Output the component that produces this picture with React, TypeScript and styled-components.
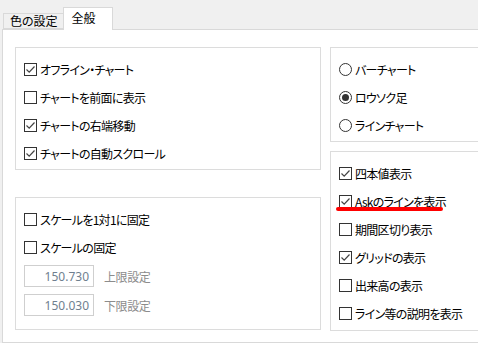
import styled, { createGlobalStyle } from "styled-components";

const GlobalStyle = createGlobalStyle`
  html, body {
    margin: 0;
    padding: 0;
    background: #f0f0f0;
    overflow: hidden;
  }
  body {
    font-family: "Noto Sans CJK JP", "Noto Sans", sans-serif;
    font-size: 12px;
    color: #000;
    font-feature-settings: "palt";
  }
`;

const Window = styled.div`
  width: 478px;
  height: 343px;
  overflow: hidden;
`;

const TabStrip = styled.div`
  display: flex;
  align-items: flex-end;
  height: 29px;
  padding-left: 3px;
`;

const Tab = styled.div<{ $active?: boolean }>`
  position: relative;
  z-index: 1;
  box-sizing: border-box;
  height: ${(p) => (p.$active ? "23px" : "16px")};
  padding: ${(p) => (p.$active ? "3px 16px 0 8px" : "0 5px 0 6px")};
  margin-bottom: ${(p) => (p.$active ? "-1px" : "0")};
  background: ${(p) => (p.$active ? "#fff" : "#f0f0f0")};
  border: 1px solid #d9d9d9;
  border-bottom: ${(p) => (p.$active ? "none" : "1px solid #d9d9d9")};
  border-right: ${(p) => (p.$active ? "1px solid #d9d9d9" : "none")};
  display: flex;
  align-items: ${(p) => (p.$active ? "flex-start" : "center")};
  font-size: 12px;
  line-height: 14px;
`;

const Panel = styled.div`
  box-sizing: border-box;
  width: 520px;
  height: 314px;
  margin-left: 2px;
  background: #fff;
  border: 1px solid #d9d9d9;
  padding: 17px 0 0 12px;
  display: flex;
  gap: 9px;
`;

const Column = styled.div<{ $gap: number; $width: number }>`
  display: flex;
  flex-direction: column;
  gap: ${(p) => p.$gap}px;
  width: ${(p) => p.$width}px;
`;

const Group = styled.div<{ $height: number }>`
  box-sizing: border-box;
  height: ${(p) => p.$height}px;
  border: 1px solid #dcdcdc;
  padding: 7px 0 0 8px;
  display: flex;
  flex-direction: column;
`;

const Row = styled.label`
  position: relative;
  display: flex;
  align-items: center;
  gap: 3px;
  height: 28px;
  white-space: nowrap;
  letter-spacing: -0.7px;
`;

const Box = styled.span`
  box-sizing: border-box;
  width: 13px;
  height: 13px;
  border: 1px solid #333;
  background: #fff;
  display: flex;
  align-items: center;
  justify-content: center;
  flex-shrink: 0;
`;

const Radio = styled.span`
  box-sizing: border-box;
  width: 13px;
  height: 13px;
  border: 1px solid #333;
  border-radius: 50%;
  background: #fff;
  display: flex;
  align-items: center;
  justify-content: center;
  flex-shrink: 0;
`;

const Dot = styled.span`
  width: 7px;
  height: 7px;
  border-radius: 50%;
  background: #333;
`;

const InputRow = styled.div`
  display: flex;
  align-items: center;
  gap: 10px;
  height: 22px;
  margin-top: 4px;
  letter-spacing: -0.4px;
  & + & {
    margin-top: 7px;
  }
`;

const NumberBox = styled.div`
  box-sizing: border-box;
  width: 70px;
  height: 22px;
  border: 1px solid #cfcfcf;
  padding-right: 4px;
  display: flex;
  align-items: center;
  justify-content: flex-end;
  color: #6f7f8f;
  font-family: "Noto Sans", sans-serif;
  font-size: 12px;
  letter-spacing: 0;
`;

const GrayLabel = styled.span`
  color: #8c8c8c;
`;

const Underline = styled.span`
  position: absolute;
  left: -3px;
  top: 20px;
  width: 107px;
  height: 4px;
  border-radius: 2px;
  background: #ff0000;
`;

const Check = ({ on }: { on?: boolean }) => (
  <Box>
    {on && (
      <svg width="11" height="11" viewBox="0 0 11 11">
        <path d="M1.5 5.5 L4.2 8.2 L9.5 2.5" fill="none" stroke="#444" strokeWidth="1.2" />
      </svg>
    )}
  </Box>
);

const CheckRow = ({ on, label, mark }: { on?: boolean; label: string; mark?: boolean }) => (
  <Row>
    <Check on={on} />
    <span>{label}</span>
    {mark && <Underline />}
  </Row>
);

const RadioRow = ({ on, label }: { on?: boolean; label: string }) => (
  <Row>
    <Radio>{on && <Dot />}</Radio>
    <span>{label}</span>
  </Row>
);

export default function App() {
  return (
    <Window>
      <GlobalStyle />
      <TabStrip>
        <Tab>色の設定</Tab>
        <Tab $active>全般</Tab>
      </TabStrip>
      <Panel>
        <Column $gap={27} $width={306}>
          <Group $height={123}>
            <CheckRow on label="オフライン・チャート" />
            <CheckRow label="チャートを前面に表示" />
            <CheckRow on label="チャートの右端移動" />
            <CheckRow on label="チャートの自動スクロール" />
          </Group>
          <Group $height={133}>
            <CheckRow label="スケールを1対1に固定" />
            <CheckRow label="スケールの固定" />
            <InputRow>
              <NumberBox>150.730</NumberBox>
              <GrayLabel>上限設定</GrayLabel>
            </InputRow>
            <InputRow>
              <NumberBox>150.030</NumberBox>
              <GrayLabel>下限設定</GrayLabel>
            </InputRow>
          </Group>
        </Column>
        <Column $gap={9} $width={180}>
          <Group $height={95}>
            <RadioRow label="バーチャート" />
            <RadioRow on label="ロウソク足" />
            <RadioRow label="ラインチャート" />
          </Group>
          <Group $height={180}>
            <CheckRow on label="四本値表示" />
            <CheckRow on label="Askのラインを表示" mark />
            <CheckRow label="期間区切り表示" />
            <CheckRow on label="グリッドの表示" />
            <CheckRow label="出来高の表示" />
            <CheckRow label="ライン等の説明を表示" />
          </Group>
        </Column>
      </Panel>
    </Window>
  );
}
